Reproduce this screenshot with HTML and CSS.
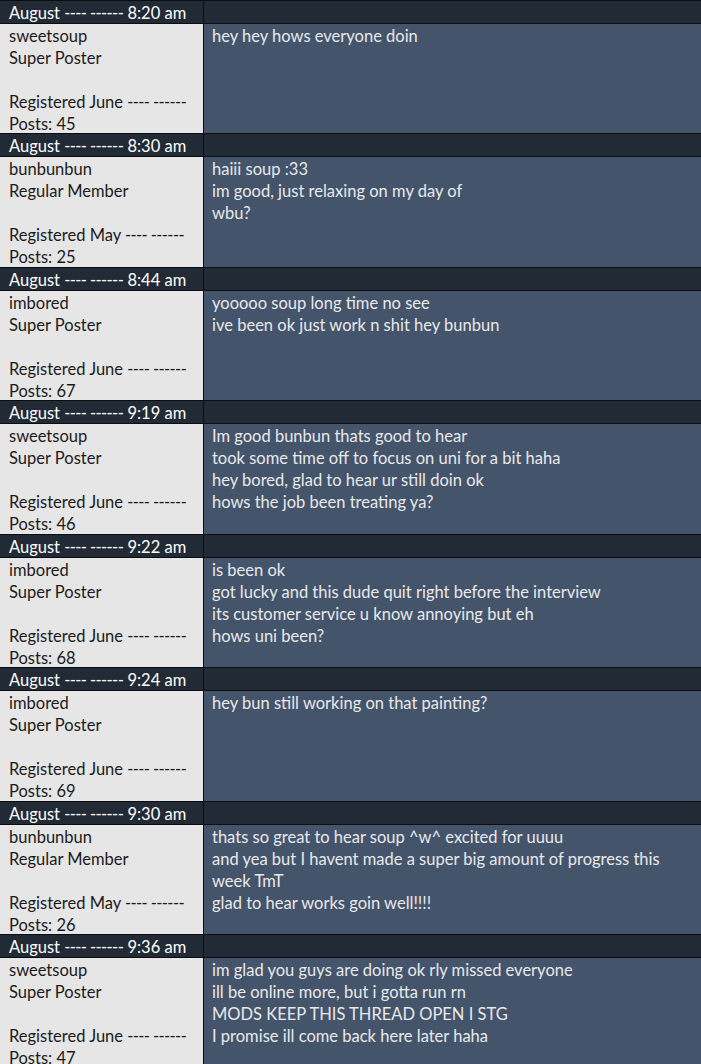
FILE: index.html
```html
<!DOCTYPE html>
<html lang="en">
<head>
<meta charset="utf-8">
<title>Thread</title>
<link rel="stylesheet" href="styles.css">
</head>
<body>
<div class="thread">
  <div class="post">
    <div class="head"><div class="date">August <span class="dashes">---- ------</span> 8:20 am</div><div class="head-fill"></div></div>
    <div class="body">
      <div class="user"><div>sweetsoup</div><div>Super Poster</div><div class="gap"></div><div>Registered June <span class="dashes">---- ------</span></div><div>Posts: 45</div></div>
      <div class="msg"><div>hey hey hows everyone doin</div></div>
    </div>
  </div>
  <div class="post">
    <div class="head"><div class="date">August <span class="dashes">---- ------</span> 8:30 am</div><div class="head-fill"></div></div>
    <div class="body">
      <div class="user"><div>bunbunbun</div><div>Regular Member</div><div class="gap"></div><div>Registered May <span class="dashes">---- ------</span></div><div>Posts: 25</div></div>
      <div class="msg"><div>haiii soup :33</div><div>im good, just relaxing on my day of</div><div>wbu?</div></div>
    </div>
  </div>
  <div class="post">
    <div class="head"><div class="date">August <span class="dashes">---- ------</span> 8:44 am</div><div class="head-fill"></div></div>
    <div class="body">
      <div class="user"><div>imbored</div><div>Super Poster</div><div class="gap"></div><div>Registered June <span class="dashes">---- ------</span></div><div>Posts: 67</div></div>
      <div class="msg"><div>yooooo soup long time no see</div><div>ive been ok just work n shit hey bunbun</div></div>
    </div>
  </div>
  <div class="post">
    <div class="head"><div class="date">August <span class="dashes">---- ------</span> 9:19 am</div><div class="head-fill"></div></div>
    <div class="body">
      <div class="user"><div>sweetsoup</div><div>Super Poster</div><div class="gap"></div><div>Registered June <span class="dashes">---- ------</span></div><div>Posts: 46</div></div>
      <div class="msg"><div>Im good bunbun thats good to hear</div><div>took some time off to focus on uni for a bit haha</div><div>hey bored, glad to hear ur still doin ok</div><div>hows the job been treating ya?</div></div>
    </div>
  </div>
  <div class="post">
    <div class="head"><div class="date">August <span class="dashes">---- ------</span> 9:22 am</div><div class="head-fill"></div></div>
    <div class="body">
      <div class="user"><div>imbored</div><div>Super Poster</div><div class="gap"></div><div>Registered June <span class="dashes">---- ------</span></div><div>Posts: 68</div></div>
      <div class="msg"><div>is been ok</div><div>got lucky and this dude quit right before the interview</div><div>its customer service u know annoying but eh</div><div>hows uni been?</div></div>
    </div>
  </div>
  <div class="post">
    <div class="head"><div class="date">August <span class="dashes">---- ------</span> 9:24 am</div><div class="head-fill"></div></div>
    <div class="body">
      <div class="user"><div>imbored</div><div>Super Poster</div><div class="gap"></div><div>Registered June <span class="dashes">---- ------</span></div><div>Posts: 69</div></div>
      <div class="msg"><div>hey bun still working on that painting?</div></div>
    </div>
  </div>
  <div class="post">
    <div class="head"><div class="date">August <span class="dashes">---- ------</span> 9:30 am</div><div class="head-fill"></div></div>
    <div class="body">
      <div class="user"><div>bunbunbun</div><div>Regular Member</div><div class="gap"></div><div>Registered May <span class="dashes">---- ------</span></div><div>Posts: 26</div></div>
      <div class="msg"><div>thats so great to hear soup ^w^ excited for uuuu</div><div>and yea but I havent made a super big amount of progress this week TmT</div><div>glad to hear works goin well!!!!</div></div>
    </div>
  </div>
  <div class="post">
    <div class="head"><div class="date">August <span class="dashes">---- ------</span> 9:36 am</div><div class="head-fill"></div></div>
    <div class="body">
      <div class="user"><div>sweetsoup</div><div>Super Poster</div><div class="gap"></div><div>Registered June <span class="dashes">---- ------</span></div><div>Posts: 47</div></div>
      <div class="msg"><div>im glad you guys are doing ok rly missed everyone</div><div>ill be online more, but i gotta run rn</div><div>MODS KEEP THIS THREAD OPEN I STG</div><div>I promise ill come back here later haha</div></div>
    </div>
  </div>
</div>
</body>
</html>
```

FILE: styles.css
```css
html, body {
  margin: 0;
  padding: 0;
  background: #44546a;
}
body {
  font-family: Lato, "Liberation Sans", sans-serif;
  font-size: 16.5px;
  line-height: 22px;
  overflow: hidden;
}
.thread {
  width: 701px;
  border-top: 1px solid #0b0d10;
}
.post {
  display: flex;
  flex-direction: column;
}
.head, .body {
  display: grid;
  grid-template-columns: 204px 1fr;
}
.head {
  height: 22px;
  background: #222b35;
  border-bottom: 1px solid #0b0d10;
}
.body {
  height: 109.43px;
  border-bottom: 1px solid #0b0d10;
}
.date {
  color: #ffffff;
  padding: 1px 8px 0 9px;
  border-right: 1px solid #0b0d10;
  white-space: nowrap;
}
.dashes {
  letter-spacing: -0.6px;
}
.user {
  background: #e7e6e6;
  color: #1b1b1b;
  padding: 1px 8px 0 9px;
  border-right: 1px solid #0b0d10;
  white-space: nowrap;
  overflow: hidden;
}
.gap {
  height: 22px;
}
.msg {
  background: #44546a;
  color: #e9e9ea;
  padding: 1px 20px 0 8px;
}
```
